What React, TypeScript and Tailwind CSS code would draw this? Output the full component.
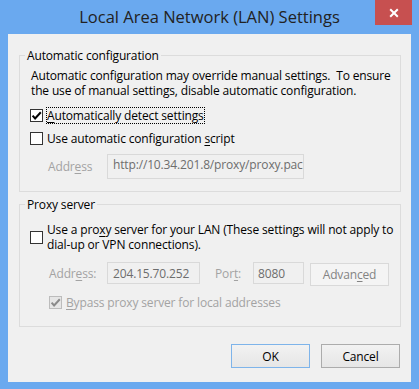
function Box({ checked, disabled }: { checked?: boolean; disabled?: boolean }) {
  return (
    <div
      className={
        disabled
          ? "w-[13px] h-[13px] shrink-0 border border-[#bcbcbc] bg-[#e6e6e6]"
          : "w-[13px] h-[13px] shrink-0 border border-[#333333] bg-white"
      }
    >
      {checked && (
        <svg width="11" height="11" viewBox="1 1 11 11" className="block">
          <path
            d="M2.6 6.6 L5.1 9.4 L10.8 3.2"
            fill="none"
            stroke={disabled ? "#8a8a8a" : "#000000"}
            strokeWidth="2"
          />
        </svg>
      )}
    </div>
  );
}

export default function App() {
  return (
    <div className="w-[419px] h-[389px] bg-[#6aa9ef] flex flex-col font-['Open_Sans',sans-serif] text-[12px] leading-[15px] tracking-[-0.15px] text-black">
      <div className="relative h-[34px] shrink-0">
        <div className="pt-[7px] text-center text-[16.5px] leading-[20px] tracking-normal text-[#222222]">
          Local Area Network (LAN) Settings
        </div>
        <div className="absolute right-[7px] top-0 w-[37px] h-[25px] bg-[#c75050] flex items-center justify-center">
          <svg width="10" height="10" viewBox="0 0 10 10" className="block">
            <path d="M1.2 1.2 L8.8 8.8 M8.8 1.2 L1.2 8.8" stroke="white" strokeWidth="2" />
          </svg>
        </div>
      </div>

      <div className="mx-[8px] mb-[7px] flex-1 bg-[#f0f0f0] pt-[14px] flex flex-col">
        <fieldset className="ml-[11px] mr-[10px] border border-[#dcdcdc]">
          <legend className="ml-[5px] px-[2px]">Automatic configuration</legend>
          <div className="pl-[11px] pt-[5px] pb-[12px]">
            <p>
              Automatic configuration may override manual settings.{"\u00a0 "}To ensure
              <br />
              the use of manual settings, disable automatic configuration.
            </p>
            <div className="mt-[9px] h-[17px] flex items-center -ml-px">
              <Box checked />
              <span className="ml-[3px] border border-dotted border-black">
                <span className="underline underline-offset-2">A</span>utomatically detect settings
              </span>
            </div>
            <div className="mt-[6px] h-[17px] flex items-center -ml-px">
              <Box />
              <span className="ml-[4px]">
                Use automatic configuration <span className="underline underline-offset-2">s</span>cript
              </span>
            </div>
            <div className="mt-[7px] flex items-start">
              <span className="ml-[17px] mt-[5px] w-[59px] text-[#a3a3a3]">
                Addr<span className="underline underline-offset-2">e</span>ss
              </span>
              <div className="w-[197px] h-[25px] border border-[#d9d9d9] bg-[#f0f0f0] pl-[5px] pt-[2px] text-[#6d6d6d]">
                http://10.34.201.8/proxy/proxy.pac
              </div>
            </div>
          </div>
        </fieldset>

        <fieldset className="mt-[5px] ml-[11px] mr-[10px] border border-[#dcdcdc]">
          <legend className="ml-[5px] px-[2px]">Proxy server</legend>
          <div className="pl-[11px] pt-[10px] pb-[15px]">
            <div className="flex items-center -ml-px">
              <Box />
              <span className="ml-[4px]">
                Use a pro<span className="underline underline-offset-2">x</span>y server for your LAN (These settings will not apply to
                <br />
                dial-up or VPN connections).
              </span>
            </div>
            <div className="mt-[10px] h-[24px] flex items-start text-[#a3a3a3]">
              <div className="ml-[18px] w-[58px] h-[22px] flex items-center">
                <span>
                  Addr<span className="underline underline-offset-2">e</span>ss:
                </span>
              </div>
              <div className="w-[93px] h-[22px] border border-[#d9d9d9] bg-[#f0f0f0] flex items-center pl-[5px] text-[#6d6d6d]">
                204.15.70.252
              </div>
              <div className="ml-[15px] w-[38px] h-[22px] flex items-center">
                <span>
                  Por<span className="underline underline-offset-2">t</span>:
                </span>
              </div>
              <div className="w-[51px] h-[22px] border border-[#d9d9d9] bg-[#f0f0f0] flex items-center pl-[4px] text-[#6d6d6d]">
                8080
              </div>
              <div className="ml-[6px] mt-px w-[79px] h-[23px] border border-[#d9d9d9] bg-[#f4f4f4] flex items-center justify-center text-[#838383]">
                <span>
                  Advan<span className="underline underline-offset-2">c</span>ed
                </span>
              </div>
            </div>
            <div className="mt-[8px] h-[17px] flex items-center">
              <div className="ml-[18px]">
                <Box checked disabled />
              </div>
              <span className="ml-[4px] text-[#a3a3a3]">
                <span className="underline underline-offset-2">B</span>ypass proxy server for local addresses
              </span>
            </div>
          </div>
        </fieldset>

        <div className="mt-[17px] flex justify-end gap-[11px] pr-[11px]">
          <button className="w-[79px] h-[24px] border border-[#7eb4ea] bg-gradient-to-b from-[#f2f2f2] to-[#e6e6e6] flex items-center justify-center">
            OK
          </button>
          <button className="w-[79px] h-[24px] border border-[#acacac] bg-gradient-to-b from-[#f2f2f2] to-[#e6e6e6] flex items-center justify-center">
            Cancel
          </button>
        </div>
      </div>
    </div>
  );
}
